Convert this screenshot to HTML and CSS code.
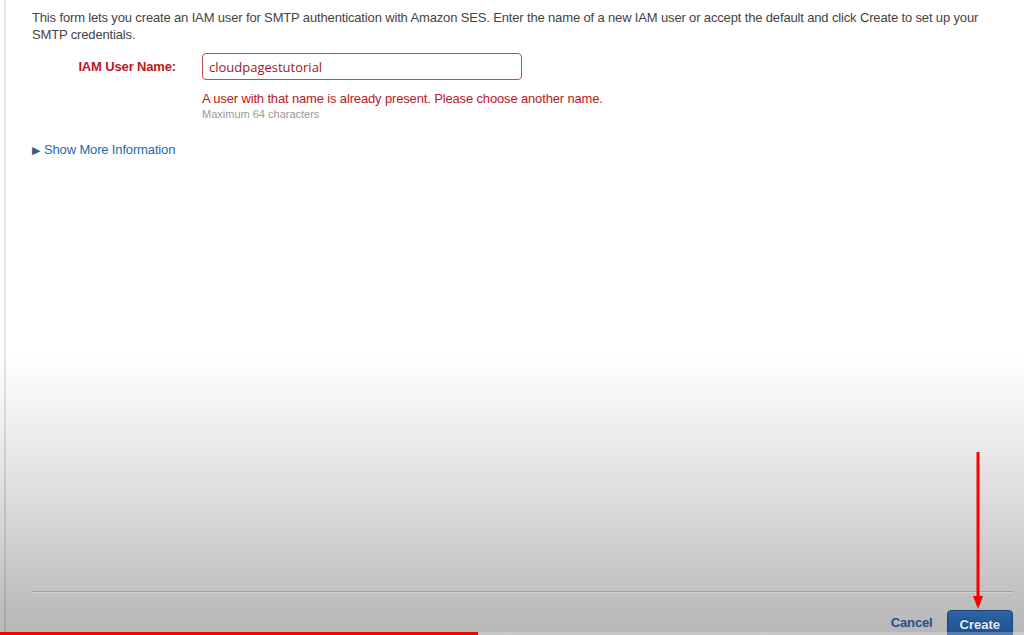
FILE: index.html
```html
<!DOCTYPE html>
<html lang="en">
<head>
    <meta charset="UTF-8">
    <meta name="viewport" content="width=device-width, initial-scale=1.0">
    <title>Create User for SMTP</title>
    <link rel="stylesheet" href="styles.css">
</head>
<body>
    <div class="page">
        <div class="form-body">
            <p class="intro">This form lets you create an IAM user for SMTP authentication with Amazon SES. Enter the name of a new IAM user or accept the default and click Create to set up your SMTP credentials.</p>

            <div class="field-row">
                <label class="field-label" for="iamUserName">IAM User Name:</label>
                <div class="field-control">
                    <input type="text" id="iamUserName" class="text-input error" value="cloudpagestutorial">
                    <div class="error-msg">A user with that name is already present. Please choose another name.</div>
                    <div class="hint">Maximum 64 characters</div>
                </div>
            </div>

            <a class="more-info" href="#"><span class="caret">&#9654;</span>Show More Information</a>
        </div>

        <div class="footer">
            <div class="footer-rule"></div>
            <div class="button-row">
                <a class="btn-link" href="#">Cancel</a>
                <button class="btn-primary">Create</button>
            </div>
        </div>
    </div>

    <!-- annotation from the recording -->
    <svg class="arrow" width="20" height="170" viewBox="0 0 20 170">
        <line x1="10" y1="2" x2="10" y2="150" stroke="#ff0000" stroke-width="3"/>
        <polygon points="5,146 15,146 10,159" fill="#ff0000"/>
    </svg>

    <div class="progress"><div class="progress-fill"></div></div>
</body>
</html>
```

FILE: styles.css
```css
:root {
    --aws-text: #444444;
    --aws-red: #c0161c;
    --aws-blue: #2369b0;
    --aws-navy: #1e4f88;
}

html, body {
    height: 100%;
    overflow: hidden;
}

body {
    margin: 0;
    font-family: "Liberation Sans", Arial, sans-serif;
    font-size: 13px;
    letter-spacing: -0.15px;
    color: var(--aws-text);
    background: linear-gradient(to bottom, #ffffff 0, #ffffff 355px, #e4e4e4 470px, #b6b6b6 635px);
}

.page {
    margin-left: 4px;
    border-left: 2px solid rgba(0, 0, 0, 0.1);
    height: 638px;
    display: flex;
    flex-direction: column;
}

.form-body {
    padding: 9px 11px 0 26px;
}

.intro {
    margin: 0;
    line-height: 17px;
}

.field-row {
    display: flex;
    gap: 26px;
    margin-top: 10px;
}

.field-label {
    width: 144px;
    text-align: right;
    font-weight: bold;
    color: var(--aws-red);
    line-height: 27px;
}

.field-control {
    display: flex;
    flex-direction: column;
}

.text-input {
    width: 320px;
    height: 27px;
    box-sizing: border-box;
    padding: 0 6px;
    border: 1px solid #ccc;
    border-radius: 4px;
    font-family: "Open Sans", "Liberation Sans", sans-serif;
    font-size: 13px;
    letter-spacing: 0;
    color: #333;
}

.text-input.error {
    border-color: #c24a4a;
    color: #a3161b;
}

.text-input:focus {
    outline: none;
}

.error-msg {
    margin-top: 10px;
    line-height: 17px;
    color: var(--aws-red);
}

.hint {
    font-size: 11px;
    line-height: 14px;
    letter-spacing: 0;
    color: #999999;
}

.more-info {
    display: inline-block;
    margin-top: 20px;
    line-height: 17px;
    color: var(--aws-blue);
    text-decoration: none;
}

.more-info .caret {
    display: inline-block;
    width: 12px;
    font-size: 11px;
    color: #3d5a80;
    vertical-align: 0;
}

.footer {
    margin-top: auto;
    padding: 0 11px 0 26px;
}

.footer-rule {
    border-top: 1px solid #a2a2a2;
    box-shadow: 0 1px 0 rgba(255, 255, 255, 0.25);
}

.button-row {
    display: flex;
    justify-content: flex-end;
    align-items: center;
    gap: 14px;
    margin-top: 18px;
}

.btn-link {
    font-weight: bold;
    color: var(--aws-navy);
    text-decoration: none;
    margin-top: -4px;
}

.btn-primary {
    height: 28px;
    padding: 0 12px;
    border: 1px solid #174377;
    border-radius: 4px;
    background: linear-gradient(to bottom, #2d64a6, #1b4f8e);
    color: #e8eef6;
    font-family: "Liberation Sans", Arial, sans-serif;
    font-size: 13px;
    font-weight: bold;
    text-shadow: 0 -1px 0 rgba(0, 0, 0, 0.35);
    cursor: pointer;
}

.arrow {
    position: absolute;
    left: 968px;
    top: 450px;
}

.progress {
    position: absolute;
    left: 0;
    right: 0;
    bottom: 0;
    height: 3px;
    background: rgba(255, 255, 255, 0.25);
}

.progress-fill {
    width: 478px;
    height: 100%;
    background: #ff0000;
}
```
